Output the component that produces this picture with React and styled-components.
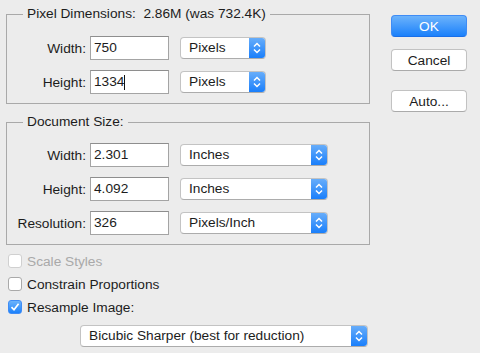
import styled, { createGlobalStyle } from "styled-components"

const GlobalStyle = createGlobalStyle`
  html, body {
    margin: 0;
    background: #ececec;
  }
  body {
    font-family: "Liberation Sans", Arial, sans-serif;
    font-size: 13.7px;
    color: #1c1c1c;
  }
`

const Window = styled.div`
  display: flex;
  width: 480px;
  height: 353px;
  padding: 6px 0 0 6px;
  box-sizing: border-box;
`

const Main = styled.div`
  display: flex;
  flex-direction: column;
  width: 364px;
`

const Group = styled.fieldset`
  margin: ${(p) => (p.$first ? "0" : "10px")} 0 0 0;
  padding: ${(p) => p.$top}px 0 9px 0;
  border: 1px solid #a9a9a9;
  display: flex;
  flex-direction: column;
  gap: 10px;
  min-width: 0;
`

const Legend = styled.legend`
  margin-left: 16px;
  padding: 0 4px;
  line-height: 16px;
  white-space: pre;
`

const FieldRow = styled.div`
  display: grid;
  grid-template-columns: 79px 79px ${(p) => p.$selectWidth}px;
  column-gap: 4px;
  align-items: center;
  height: 24px;
`

const Label = styled.label`
  text-align: right;
`

const Input = styled.div`
  box-sizing: border-box;
  height: 24px;
  width: 79px;
  background: #fff;
  border: 1px solid #a4a4a4;
  border-top-color: #8e8e8e;
  padding: 0 3px;
  line-height: 22px;
  display: flex;
  align-items: center;
`

const Caret = styled.span`
  display: inline-block;
  width: 1px;
  height: 15px;
  background: #111;
`

const SelectBox = styled.div`
  box-sizing: border-box;
  display: flex;
  height: 22px;
  width: ${(p) => p.$width}px;
  margin-left: ${(p) => p.$offset || 0}px;
  background: #fff;
  border: 1px solid #c3c3c3;
  border-bottom-color: #acacac;
  border-radius: 4px;
  overflow: hidden;
`

const SelectText = styled.span`
  flex: 1;
  padding-left: 8px;
  line-height: 20px;
  white-space: nowrap;
`

const Stepper = styled.span`
  width: 16px;
  background: linear-gradient(#67adfa, #1a7ffb);
  display: flex;
  align-items: center;
  justify-content: center;
`

const Side = styled.div`
  display: flex;
  flex-direction: column;
  margin-left: 21px;
  padding-top: 9px;
`

const Button = styled.button`
  box-sizing: border-box;
  width: 76px;
  height: 22px;
  margin-bottom: ${(p) => p.$after || 0}px;
  border-radius: 4px;
  font-family: inherit;
  font-size: 13.7px;
  padding: 0;
  border: 1px solid ${(p) => (p.$primary ? "#3f8cf5" : "#c2c2c2")};
  border-bottom-color: ${(p) => (p.$primary ? "#1a6fe8" : "#aaaaaa")};
  background: ${(p) => (p.$primary ? "linear-gradient(#6cb3fb, #1b81fb)" : "#fff")};
  color: ${(p) => (p.$primary ? "#fff" : "#1c1c1c")};
`

const Checks = styled.div`
  display: flex;
  flex-direction: column;
  gap: 5px;
  margin-top: 7px;
  padding-left: 2px;
`

const CheckRow = styled.div`
  display: flex;
  align-items: center;
  gap: 5px;
  height: 18px;
  color: ${(p) => (p.$disabled ? "#a9a9a9" : "#1c1c1c")};
`

const Box = styled.span`
  box-sizing: border-box;
  width: 14px;
  height: 14px;
  border-radius: 3px;
  display: flex;
  align-items: center;
  justify-content: center;
  background: ${(p) => (p.$checked ? "linear-gradient(#6cb3fb, #1b81fb)" : "#fff")};
  border: 1px solid ${(p) => (p.$checked ? "#3f8cf5" : p.$disabled ? "#d0d0d0" : "#a9a9a9")};
`

const MethodRow = styled.div`
  margin-top: 9px;
`

const Arrows = () => (
  <svg width="10" height="14" viewBox="0 0 10 14">
    <path d="M2 5.5 L5 2.5 L8 5.5" fill="none" stroke="#fff" strokeWidth="1.5" />
    <path d="M2 8.5 L5 11.5 L8 8.5" fill="none" stroke="#fff" strokeWidth="1.5" />
  </svg>
)

const Select = ({ value, width, offset }) => (
  <SelectBox $width={width} $offset={offset}>
    <SelectText>{value}</SelectText>
    <Stepper>
      <Arrows />
    </Stepper>
  </SelectBox>
)

const Check = ({ label, checked, disabled }) => (
  <CheckRow $disabled={disabled}>
    <Box $checked={checked} $disabled={disabled}>
      {checked && (
        <svg width="10" height="10" viewBox="0 0 10 10">
          <path d="M1.5 5.2 L4 7.8 L8.6 1.8" fill="none" stroke="#fff" strokeWidth="1.7" />
        </svg>
      )}
    </Box>
    {label}
  </CheckRow>
)

const pixelRows = [
  { label: "Width:", value: "750", unit: "Pixels" },
  { label: "Height:", value: "1334", unit: "Pixels", caret: true },
]

const docRows = [
  { label: "Width:", value: "2.301", unit: "Inches" },
  { label: "Height:", value: "4.092", unit: "Inches" },
  { label: "Resolution:", value: "326", unit: "Pixels/Inch" },
]

const App = () => {
  return (
    <>
      <GlobalStyle />
      <Window>
        <Main>
          <Group $first $top={14}>
            <Legend>{"Pixel Dimensions:  2.86M (was 732.4K)"}</Legend>
            {pixelRows.map((row) => (
              <FieldRow key={row.label} $selectWidth={86}>
                <Label>{row.label}</Label>
                <Input>
                  {row.value}
                  {row.caret && <Caret />}
                </Input>
                <Select value={row.unit} width={86} offset={7} />
              </FieldRow>
            ))}
          </Group>
          <Group $top={13}>
            <Legend>Document Size:</Legend>
            {docRows.map((row) => (
              <FieldRow key={row.label} $selectWidth={148}>
                <Label>{row.label}</Label>
                <Input>{row.value}</Input>
                <Select value={row.unit} width={148} offset={7} />
              </FieldRow>
            ))}
          </Group>
          <Checks>
            <Check label="Scale Styles" disabled />
            <Check label="Constrain Proportions" />
            <Check label="Resample Image:" checked />
          </Checks>
          <MethodRow>
            <Select value="Bicubic Sharper (best for reduction)" width={288} offset={74} />
          </MethodRow>
        </Main>
        <Side>
          <Button $primary $after={12}>OK</Button>
          <Button $after={19}>Cancel</Button>
          <Button>Auto...</Button>
        </Side>
      </Window>
    </>
  )
}

export default App
